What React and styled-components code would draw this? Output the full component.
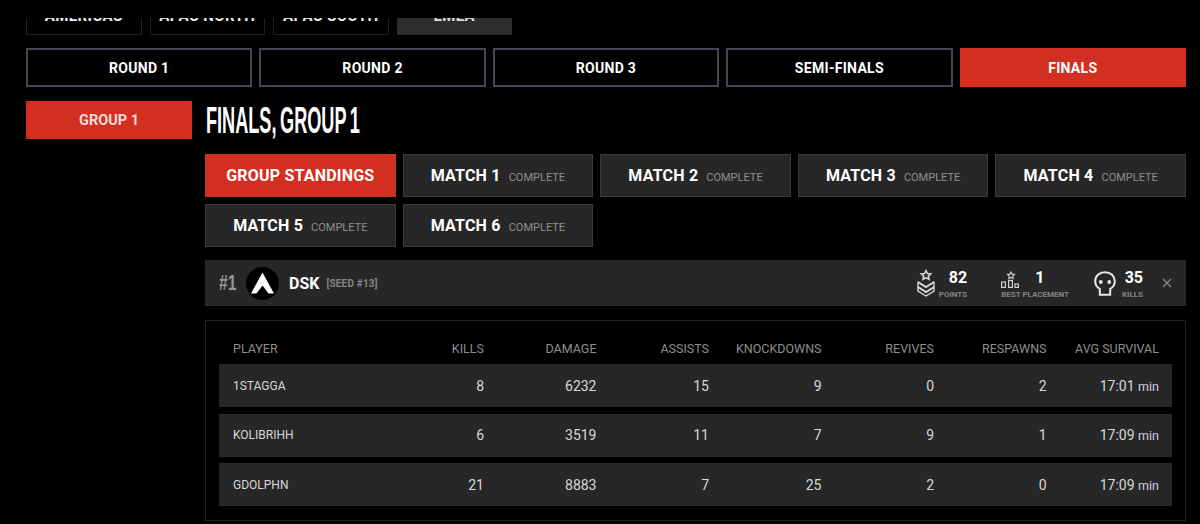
import React from "react";
import styled, { createGlobalStyle } from "styled-components";

const Global = createGlobalStyle`
  html, body { margin: 0; padding: 0; background: #000; height: 524px; overflow: hidden; }
  body { font-family: "Roboto", "Liberation Sans", sans-serif; color: #fff; }
`;

const Page = styled.div`
  width: 1200px;
  height: 524px;
  overflow: hidden;
  padding: 18px 14px 0 26px;
  box-sizing: border-box;
  background: #000;
`;

const RegionClip = styled.div`
  height: 17px;
  overflow: hidden;
  display: flex;
  align-items: flex-end;
  gap: 8px;
`;

const RegionTab = styled.div`
  width: 115.5px;
  height: 38px;
  flex: none;
  box-sizing: border-box;
  display: flex;
  align-items: center;
  justify-content: center;
  font-size: 15px;
  font-weight: 700;
  letter-spacing: .4px;
  white-space: nowrap;
  color: ${({ $active }) => ($active ? "#ddd" : "#eee")};
  background: ${({ $active }) => ($active ? "#2d2d2d" : "#000")};
  border: 1px solid ${({ $active }) => ($active ? "#2d2d2d" : "#202020")};
`;

const RoundRow = styled.div`
  display: grid;
  grid-template-columns: repeat(5, 1fr);
  gap: 7px;
  margin-top: 13px;
`;

const RoundTab = styled.div`
  height: 39px;
  box-sizing: border-box;
  display: flex;
  align-items: center;
  justify-content: center;
  font-size: 14px;
  font-weight: 700;
  letter-spacing: .3px;
  padding-top: 1px;
  background: ${({ $active }) => ($active ? "#d32f20" : "#000")};
  border: 2px solid ${({ $active }) => ($active ? "#d32f20" : "#454752")};
`;

const Body = styled.div`
  display: grid;
  grid-template-columns: 166px 1fr;
  column-gap: 13px;
  margin-top: 14px;
`;

const GroupTab = styled.div`
  height: 38px;
  display: flex;
  align-items: center;
  justify-content: center;
  background: #d32f20;
  font-size: 14.5px;
  font-weight: 700;
  color: #f4dcd8;
`;

const Main = styled.div`
  min-width: 0;
`;

const Title = styled.h1`
  margin: 0 0 0 1px;
  height: 53px;
  font-family: "Liberation Sans", sans-serif;
  font-size: 37px;
  line-height: 40px;
  font-weight: 700;
  word-spacing: -3px;
  white-space: nowrap;
  transform: scaleX(.49);
  transform-origin: left top;
`;

const MatchGrid = styled.div`
  display: grid;
  grid-template-columns: repeat(5, 1fr);
  gap: 7px;
`;

const MatchTab = styled.div`
  height: 43px;
  box-sizing: border-box;
  display: flex;
  align-items: baseline;
  justify-content: center;
  gap: 8px;
  line-height: 42px;
  background: ${({ $active }) => ($active ? "#d32f20" : "#272727")};
  border: 1px solid ${({ $active }) => ($active ? "#b23a2e" : "#3a3a3a")};
`;

const MatchName = styled.span`
  font-size: 16px;
  font-weight: 700;
  letter-spacing: .2px;
`;

const MatchStatus = styled.span`
  font-size: 11px;
  color: #8f8f8f;
`;

const TeamBar = styled.div`
  height: 46px;
  margin-top: 13px;
  display: flex;
  align-items: center;
  background: #272727;
  padding: 0 14px;
`;

const Rank = styled.div`
  width: 27px;
  font-family: "Liberation Sans", sans-serif;
  font-size: 22px;
  font-weight: 700;
  color: #969696;
  transform: scaleX(.72);
  transform-origin: left center;
`;

const Logo = styled.svg`
  width: 33px;
  height: 33px;
  flex: none;
`;

const TeamName = styled.div`
  margin-left: 10px;
  font-size: 16px;
  font-weight: 700;
`;

const Seed = styled.div`
  margin-left: 7px;
  font-size: 10px;
  font-weight: 700;
  color: #858585;
  letter-spacing: .2px;
`;

const Stats = styled.div`
  margin-left: auto;
  display: flex;
  align-items: center;
`;

const Stat = styled.div`
  display: flex;
  align-items: center;
  gap: ${({ $gap }) => $gap}px;
  margin-right: ${({ $right }) => $right}px;
`;

const StatText = styled.div`
  display: flex;
  flex-direction: column;
  align-items: flex-end;
  padding-top: 3px;
`;

const StatTop = styled.div`
  display: flex;
  align-items: flex-end;
  align-self: flex-start;
  gap: 16px;
`;

const StatValue = styled.div`
  font-size: 16px;
  font-weight: 700;
  line-height: 20px;
`;

const StatLabel = styled.div`
  font-size: 8px;
  font-weight: 700;
  line-height: 13px;
  color: #858585;
  white-space: nowrap;
`;

const Close = styled.svg`
  width: 10px;
  height: 10px;
  flex: none;
`;

const Panel = styled.div`
  margin-top: 14px;
  height: 201px;
  box-sizing: border-box;
  border: 1px solid #222;
  padding: 0 13px;
`;

const cols = "1fr repeat(7, 112.5px)";

const HeadRow = styled.div`
  display: grid;
  grid-template-columns: ${cols};
  height: 43px;
  padding: 0 13px 0 14px;
  align-items: end;
  font-size: 12.5px;
  color: #8e8e8e;
  line-height: 30px;
`;

const Rows = styled.div`
  display: grid;
  gap: 6.5px;
`;

const Row = styled.div`
  display: grid;
  grid-template-columns: ${cols};
  height: 43px;
  padding: 0 13px 0 14px;
  align-items: center;
  background: #272727;
  font-size: 14px;
  color: #d8d8d8;
`;

const Cell = styled.div`
  text-align: ${({ $left }) => ($left ? "left" : "right")};
  white-space: nowrap;
`;

const PlayerCell = styled(Cell)`
  font-size: 12px;
`;

const Unit = styled.span`
  font-size: 12.5px;
  color: #cfcfe0;
`;

const regions = ["AMERICAS", "APAC NORTH", "APAC SOUTH", "EMEA"];
const rounds = ["ROUND 1", "ROUND 2", "ROUND 3", "SEMI-FINALS", "FINALS"];
const heads = ["PLAYER", "KILLS", "DAMAGE", "ASSISTS", "KNOCKDOWNS", "REVIVES", "RESPAWNS", "AVG SURVIVAL"];
const players = [
  ["1STAGGA", 8, 6232, 15, 9, 0, 2, "17:01"],
  ["KOLIBRIHH", 6, 3519, 11, 7, 9, 1, "17:09"],
  ["GDOLPHN", 21, 8883, 7, 25, 2, 0, "17:09"],
];

const MedalIcon = () => (
  <svg width="18" height="28" viewBox="0 0 18 28" fill="none" stroke="#d8d8d8" style={{ flex: "none" }}>
    <path d="M9 1.500l1.500 3 3.200.4-2.300 2.200.6 3.100L9 8.700l-3 1.500.6-3.100-2.300-2.200 3.200-.4z" strokeWidth="1.600" />
    <path d="M1 12.500v9.500l8 5 8-5v-9.500" strokeWidth="1.400" />
    <path d="M1 13l8 5 8-5" strokeWidth="2" />
    <path d="M1 18l8 5 8-5" strokeWidth="2" />
  </svg>
);

const PodiumIcon = () => (
  <svg width="18" height="17" viewBox="0 0 18 17" fill="none" stroke="#cfcfcf" strokeWidth="1.200" style={{ flex: "none" }}>
    <path d="M10 1l1 2.200 2.400.3-1.700 1.600.4 2.400L10 6.400 7.900 7.500l.4-2.400-1.700-1.600L9 3.200z" />
    <rect x=".6" y="11" width="3.800" height="5.400" />
    <rect x="7.600" y="9.500" width="3.800" height="6.900" />
    <rect x="14" y="13" width="3.400" height="3.400" />
  </svg>
);

const SkullIcon = () => (
  <svg width="22" height="25" viewBox="0 0 22 25" style={{ flex: "none" }}>
    <path d="M11 1.200C5.200 1.200 1.200 5.200 1.200 10.300c0 3.400 1.700 6 4.600 7.500v5.900h10.400v-5.900c2.900-1.500 4.600-4.100 4.600-7.500 0-5.100-4-9.100-9.800-9.100z" fill="none" stroke="#e8e8e8" strokeWidth="2" />
    <circle cx="6.800" cy="11" r="1.900" fill="#e8e8e8" />
    <circle cx="15.200" cy="11" r="1.900" fill="#e8e8e8" />
  </svg>
);

export default function App() {
  return (
    <Page>
      <Global />
      <RegionClip>
        {regions.map((r, i) => (
          <RegionTab key={r} $active={i === 3}>{r}</RegionTab>
        ))}
      </RegionClip>
      <RoundRow>
        {rounds.map((r, i) => (
          <RoundTab key={r} $active={i === 4}>{r}</RoundTab>
        ))}
      </RoundRow>
      <Body>
        <GroupTab>GROUP 1</GroupTab>
        <Main>
          <Title>FINALS, GROUP 1</Title>
          <MatchGrid>
            <MatchTab $active><MatchName>GROUP STANDINGS</MatchName></MatchTab>
            {[1, 2, 3, 4, 5, 6].map((n) => (
              <MatchTab key={n}>
                <MatchName>MATCH {n}</MatchName>
                <MatchStatus>COMPLETE</MatchStatus>
              </MatchTab>
            ))}
          </MatchGrid>
          <TeamBar>
            <Rank>#1</Rank>
            <Logo viewBox="0 0 33 33">
              <circle cx="16.500" cy="16.500" r="16.500" fill="#000" />
              <path d="M16.500 5.500L28 26.500h-5.500l-6-8-6 8H5z" fill="#fff" />
            </Logo>
            <TeamName>DSK</TeamName>
            <Seed>[SEED #13]</Seed>
            <Stats>
              <Stat $gap={4} $right={34}>
                <MedalIcon />
                <StatText>
                  <StatValue>82</StatValue>
                  <StatLabel>POINTS</StatLabel>
                </StatText>
              </Stat>
              <Stat $gap={0} $right={25}>
                <StatText>
                  <StatTop>
                    <PodiumIcon />
                    <StatValue>1</StatValue>
                  </StatTop>
                  <StatLabel>BEST PLACEMENT</StatLabel>
                </StatText>
              </Stat>
              <Stat $gap={6} $right={19}>
                <SkullIcon />
                <StatText>
                  <StatValue>35</StatValue>
                  <StatLabel>KILLS</StatLabel>
                </StatText>
              </Stat>
              <Close viewBox="0 0 10 10">
                <path d="M1 1l8 8M9 1l-8 8" stroke="#8a8a8a" strokeWidth="1.200" />
              </Close>
            </Stats>
          </TeamBar>
          <Panel>
            <HeadRow>
              {heads.map((h, i) => (
                <Cell key={h} $left={i === 0}>{h}</Cell>
              ))}
            </HeadRow>
            <Rows>
              {players.map((p) => (
                <Row key={p[0]}>
                  <PlayerCell $left>{p[0]}</PlayerCell>
                  {p.slice(1, 7).map((v, i) => (
                    <Cell key={i}>{v}</Cell>
                  ))}
                  <Cell>{p[7]} <Unit>min</Unit></Cell>
                </Row>
              ))}
            </Rows>
          </Panel>
        </Main>
      </Body>
    </Page>
  );
}
